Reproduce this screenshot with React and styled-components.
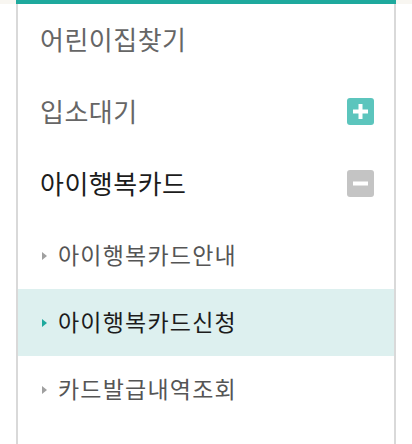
import React from 'react';
import styled, { createGlobalStyle } from 'styled-components';

const GlobalStyle = createGlobalStyle`
  html, body {
    margin: 0;
    padding: 0;
    background: #ffffff;
  }
  body {
    font-family: "Noto Sans CJK KR", "Noto Sans", sans-serif;
  }
`;

const Page = styled.div`
  width: 412px;
  height: 444px;
  overflow: hidden;
  background: #ffffff;
`;

const TopStrip = styled.div`
  height: 4px;
  background: #f8f6f1;
  padding: 0 16px;
`;

const TealBar = styled.div`
  height: 4px;
  background: #1ea99d;
`;

const Panel = styled.nav`
  margin: 0 16px;
  border-left: 2px solid #d9d9d9;
  border-right: 2px solid #d9d9d9;
  height: 440px;
  box-sizing: border-box;
`;

const MenuRow = styled.div`
  height: 72px;
  box-sizing: border-box;
  display: flex;
  align-items: center;
  justify-content: space-between;
  padding: 0 20px 2px 22px;
`;

const MenuLabel = styled.span`
  font-size: 26px;
  letter-spacing: 0.5px;
  color: ${(p) => (p.$open ? '#1c1c1c' : '#666666')};
  line-height: 1;
`;

const Toggle = styled.span`
  width: 27px;
  height: 27px;
  border-radius: 3px;
  background: ${(p) => (p.$open ? '#c4c4c4' : '#5cc5bd')};
  display: flex;
  align-items: center;
  justify-content: center;
`;

const SubList = styled.ul`
  list-style: none;
  margin: 2px 0 0;
  padding: 0;
`;

const SubItem = styled.li`
  height: 67px;
  display: flex;
  align-items: center;
  padding: 0 0 3px 24px;
  box-sizing: border-box;
  gap: 11px;
  background: ${(p) => (p.$active ? '#ddf0ef' : 'transparent')};
`;

const Arrow = styled.span`
  width: 0;
  height: 0;
  border-top: 4px solid transparent;
  border-bottom: 4px solid transparent;
  border-left: 5px solid ${(p) => (p.$active ? '#1ea99d' : '#a0a0a0')};
  margin-top: 4px;
`;

const SubLabel = styled.span`
  font-size: 23px;
  letter-spacing: 1.2px;
  line-height: 1;
  color: ${(p) => (p.$active ? '#1c1c1c' : '#555555')};
`;

const PlusIcon = () => (
  <svg width="15" height="15" viewBox="0 0 15 15">
    <rect x="5.5" y="0" width="4" height="15" fill="#fff" />
    <rect x="0" y="5.5" width="15" height="4" fill="#fff" />
  </svg>
);

const MinusIcon = () => (
  <svg width="15" height="15" viewBox="0 0 15 15">
    <rect x="0" y="5.5" width="15" height="4" fill="#fff" />
  </svg>
);

const subMenu = [
  { label: '아이행복카드안내' },
  { label: '아이행복카드신청', active: true },
  { label: '카드발급내역조회' },
];

export default function App() {
  return (
    <Page>
      <GlobalStyle />
      <TopStrip>
        <TealBar />
      </TopStrip>
      <Panel>
        <MenuRow>
          <MenuLabel>어린이집찾기</MenuLabel>
        </MenuRow>
        <MenuRow>
          <MenuLabel>입소대기</MenuLabel>
          <Toggle>
            <PlusIcon />
          </Toggle>
        </MenuRow>
        <MenuRow>
          <MenuLabel $open>아이행복카드</MenuLabel>
          <Toggle $open>
            <MinusIcon />
          </Toggle>
        </MenuRow>
        <SubList>
          {subMenu.map((item) => (
            <SubItem key={item.label} $active={item.active}>
              <Arrow $active={item.active} />
              <SubLabel $active={item.active}>{item.label}</SubLabel>
            </SubItem>
          ))}
        </SubList>
      </Panel>
    </Page>
  );
}
